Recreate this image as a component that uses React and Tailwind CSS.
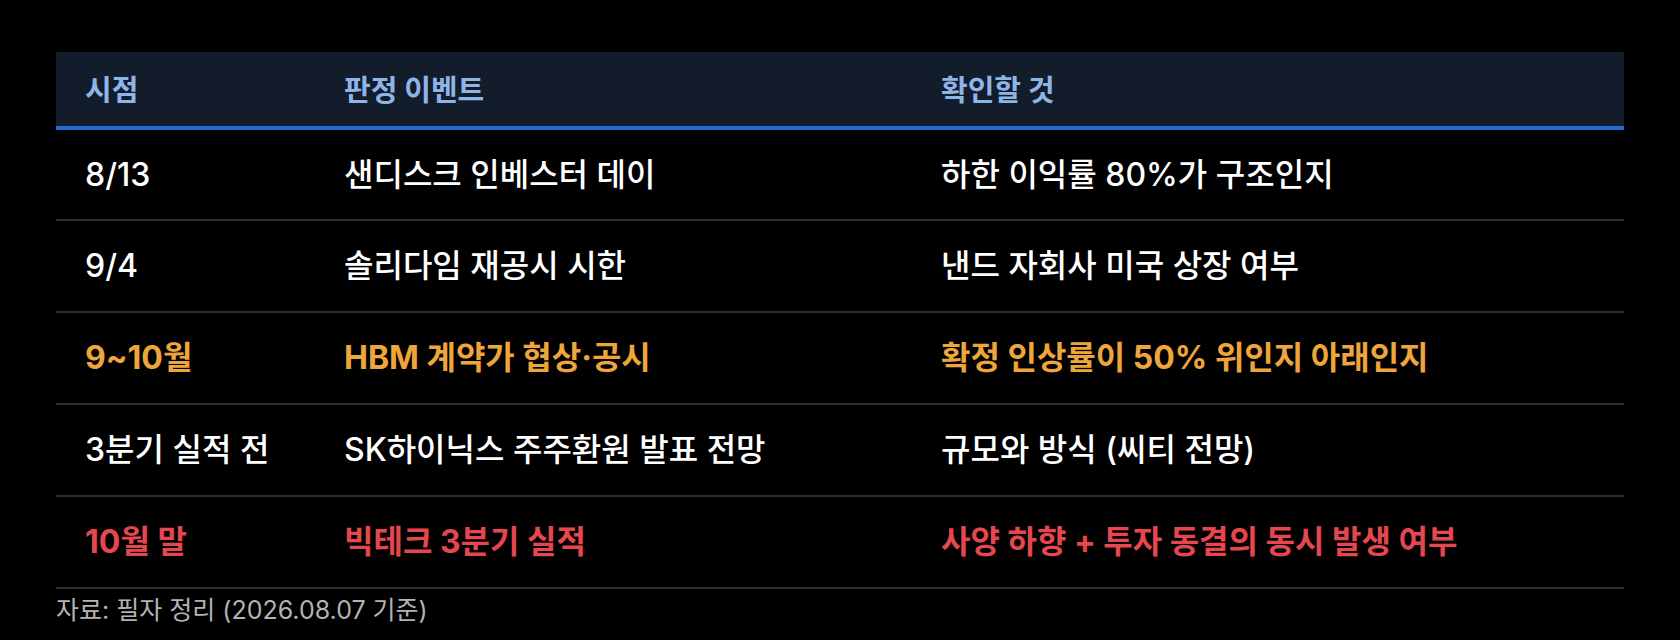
const rows = [
  { when: "8/13", event: "샌디스크 인베스터 데이", check: "하한 이익률 80%가 구조인지", tone: "plain" },
  { when: "9/4", event: "솔리다임 재공시 시한", check: "낸드 자회사 미국 상장 여부", tone: "plain" },
  { when: "9~10월", event: "HBM 계약가 협상·공시", check: "확정 인상률이 50% 위인지 아래인지", tone: "warn" },
  { when: "3분기 실적 전", event: "SK하이닉스 주주환원 발표 전망", check: "규모와 방식 (씨티 전망)", tone: "plain" },
  { when: "10월 말", event: "빅테크 3분기 실적", check: "사양 하향 + 투자 동결의 동시 발생 여부", tone: "alert" },
];

const toneClass = {
  plain: "text-white font-medium",
  warn: "text-[#eda53c] font-bold",
  alert: "text-[#e5474f] font-bold",
};

export default function App() {
  return (
    <div
      className="min-h-[640px] w-full bg-black px-[56px] pt-[52px]"
      style={{ fontFamily: '"Inter", "Noto Sans CJK KR", sans-serif' }}
    >
      {/* 헤더 */}
      <div className="grid h-[78px] grid-cols-[259px_597px_1fr] items-center border-b-4 border-[#1f6dd5] bg-[#121c2b] pt-[4px] text-[29px] font-bold text-[#8fb4e8]">
        <div className="pl-[29px]">시점</div>
        <div className="pl-[29px]">판정 이벤트</div>
        <div className="pl-[29px]">확인할 것</div>
      </div>

      {rows.map((r, i) => (
        <div
          key={i}
          className={
            "grid grid-cols-[259px_597px_1fr] items-center border-b-2 border-[#2f2f2f] text-[32px] leading-none " +
            (i === 0 ? "h-[91px] " : "h-[92px] ") +
            toneClass[r.tone]
          }
        >
          <div className="pl-[29px]">{r.when}</div>
          <div className="pl-[29px]">{r.event}</div>
          <div className="pl-[29px]">{r.check}</div>
        </div>
      ))}

      <p className="mt-[4px] text-[25px] leading-[34px] text-[#b3b3b3]">자료: 필자 정리 (2026.08.07 기준)</p>
    </div>
  );
}
